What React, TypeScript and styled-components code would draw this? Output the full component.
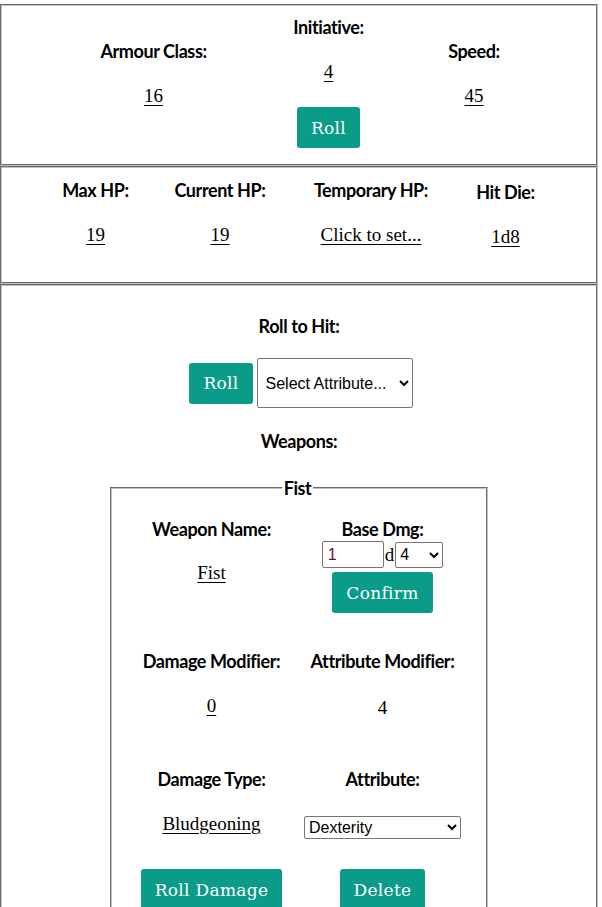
import styled, { createGlobalStyle } from "styled-components";

const teal = '#0a9c89';
const frame = '2px groove rgb(192, 192, 192)';

const GlobalStyle = createGlobalStyle`
    body{
        margin: 0;
        background: #fff;
        color: #000;
        font-family: Lato, "Noto Sans", sans-serif;
    }
`;

const App = () => {
    return(
        <>
            <GlobalStyle/>
            <Page>
                <StatBox $padTop={10} $padBottom={16}>
                    <StatRow $gap={80}>
                        <StatCol $width={112} $offset={24}>
                            <Label>Armour Class:</Label>
                            <Value>16</Value>
                        </StatCol>
                        <StatCol $width={78}>
                            <Label>Initiative:</Label>
                            <Value>4</Value>
                            <Button $top={24}>Roll</Button>
                        </StatCol>
                        <StatCol $width={53} $offset={24}>
                            <Label>Speed:</Label>
                            <Value>45</Value>
                        </StatCol>
                    </StatRow>
                </StatBox>
                <StatBox $padTop={11} $padBottom={34}>
                    <StatRow $gap={45}>
                        <StatCol $width={66}>
                            <Label>Max HP:</Label>
                            <Value>19</Value>
                        </StatCol>
                        <StatCol $width={93}>
                            <Label>Current HP:</Label>
                            <Value>19</Value>
                        </StatCol>
                        <StatCol $width={119}>
                            <Label>Temporary HP:</Label>
                            <Value>Click to set...</Value>
                        </StatCol>
                        <StatCol $width={60} $offset={2}>
                            <Label>Hit Die:</Label>
                            <Value>1d8</Value>
                        </StatCol>
                    </StatRow>
                </StatBox>
                <AttackBox>
                    <Label>Roll to Hit:</Label>
                    <RollRow>
                        <Button>Roll</Button>
                        <AttrSelect defaultValue="">
                            <option value="">Select Attribute...</option>
                            <option>Strength</option>
                            <option>Dexterity</option>
                        </AttrSelect>
                    </RollRow>
                    <Label $top={22}>Weapons:</Label>
                    <WeaponSet>
                        <Legend>Fist</Legend>
                        <WeaponRow $top={0}>
                            <Cell>
                                <Label>Weapon Name:</Label>
                                <Value $top={22}>Fist</Value>
                            </Cell>
                            <Cell>
                                <Label>Base Dmg:</Label>
                                <DiceRow>
                                    <DiceInput defaultValue="1"/>
                                    <DiceD>d</DiceD>
                                    <DieSelect defaultValue="4">
                                        <option>4</option>
                                        <option>6</option>
                                        <option>8</option>
                                        <option>10</option>
                                        <option>12</option>
                                    </DieSelect>
                                </DiceRow>
                                <Button $top={4}>Confirm</Button>
                            </Cell>
                        </WeaponRow>
                        <WeaponRow $top={37}>
                            <Cell>
                                <Label>Damage Modifier:</Label>
                                <Value>0</Value>
                            </Cell>
                            <Cell>
                                <Label>Attribute Modifier:</Label>
                                <Value $plain $top={25}>4</Value>
                            </Cell>
                        </WeaponRow>
                        <WeaponRow $top={49}>
                            <Cell>
                                <Label>Damage Type:</Label>
                                <Value>Bludgeoning</Value>
                            </Cell>
                            <Cell>
                                <Label>Attribute:</Label>
                                <StatSelect defaultValue="Dexterity">
                                    <option>Strength</option>
                                    <option>Dexterity</option>
                                    <option>Constitution</option>
                                </StatSelect>
                            </Cell>
                        </WeaponRow>
                        <WeaponRow $top={30}>
                            <Cell>
                                <Button>Roll Damage</Button>
                            </Cell>
                            <Cell>
                                <Button>Delete</Button>
                            </Cell>
                        </WeaponRow>
                    </WeaponSet>
                </AttackBox>
            </Page>
        </>
    );
};

export default App;

const Page = styled.div`
    width: 598px;
    padding-top: 4px;
`;

const StatBox = styled.section<{ $padTop: number; $padBottom: number }>`
    box-sizing: border-box;
    width: 598px;
    border: ${frame};
    padding: ${p => p.$padTop}px 0 ${p => p.$padBottom}px;
`;

const StatRow = styled.div<{ $gap: number }>`
    display: flex;
    justify-content: center;
    align-items: flex-start;
    gap: ${p => p.$gap}px;
`;

const StatCol = styled.div<{ $width: number; $offset?: number }>`
    display: flex;
    flex-direction: column;
    align-items: center;
    width: ${p => p.$width}px;
    padding-top: ${p => p.$offset ?? 0}px;
    white-space: nowrap;
`;

const Label = styled.div<{ $top?: number }>`
    margin-top: ${p => p.$top ?? 0}px;
    font-family: Lato, "Noto Sans", sans-serif;
    font-weight: 700;
    font-size: 18px;
    line-height: 22px;
    letter-spacing: -0.4px;
    white-space: nowrap;
`;

const Value = styled.div<{ $top?: number; $plain?: boolean }>`
    margin-top: ${p => p.$top ?? 23}px;
    font-family: "Liberation Serif", serif;
    font-size: 19px;
    line-height: 22px;
    text-decoration: ${p => p.$plain ? 'none' : 'underline'};
    text-underline-offset: 3px;
    cursor: pointer;
    white-space: nowrap;
`;

const Button = styled.button<{ $top?: number }>`
    margin-top: ${p => p.$top ?? 0}px;
    height: 41px;
    padding: 0 14px;
    border: none;
    border-radius: 3px;
    background: ${teal};
    color: #fff;
    font-family: "DejaVu Serif", serif;
    font-size: 17px;
    letter-spacing: 0.3px;
    cursor: pointer;
    white-space: nowrap;
`;

const AttackBox = styled.section`
    box-sizing: border-box;
    width: 598px;
    border: ${frame};
    padding: 29px 0 60px;
    display: flex;
    flex-direction: column;
    align-items: center;
`;

const RollRow = styled.div`
    display: flex;
    align-items: center;
    gap: 4px;
    margin-top: 21px;
    padding-left: 4px;
`;

const AttrSelect = styled.select`
    width: 156px;
    height: 50px;
    padding: 0 4px;
    border: 1px solid #767676;
    border-radius: 2px;
    background: #fff;
    color: #000;
    font-family: "Liberation Sans", Arial, sans-serif;
    font-size: 16px;
`;

const WeaponSet = styled.fieldset`
    box-sizing: border-box;
    width: 378px;
    margin: 25px 0 0;
    padding: 19px 17px 40px 14px;
    border: ${frame};
    min-inline-size: 0;
`;

const Legend = styled.legend`
    margin: 0 auto;
    padding: 0 2px;
    font-weight: 700;
    font-size: 18px;
    line-height: 22px;
    letter-spacing: -0.4px;
`;

const WeaponRow = styled.div<{ $top: number }>`
    display: grid;
    grid-template-columns: 171px 171px;
    align-items: start;
    margin-top: ${p => p.$top}px;
`;

const Cell = styled.div`
    display: flex;
    flex-direction: column;
    align-items: center;
`;

const DiceRow = styled.div`
    display: flex;
    align-items: center;
    gap: 1px;
    margin-top: 1px;
`;

const DiceInput = styled.input`
    box-sizing: border-box;
    width: 62px;
    height: 27px;
    padding: 0 5px;
    border: 1px solid #767676;
    border-radius: 2px;
    color: #6a0d3c;
    font-family: "Liberation Sans", Arial, sans-serif;
    font-size: 16px;
`;

const DiceD = styled.span`
    font-family: "Liberation Serif", serif;
    font-size: 19px;
    line-height: 22px;
`;

const DieSelect = styled.select`
    width: 48px;
    height: 26px;
    border: 1px solid #767676;
    border-radius: 2px;
    background: #fff;
    color: #000;
    font-family: "Liberation Sans", Arial, sans-serif;
    font-size: 16px;
`;

const StatSelect = styled.select`
    width: 157px;
    height: 23px;
    margin-top: 26px;
    border: 1px solid #767676;
    border-radius: 2px;
    background: #fff;
    color: #000;
    font-family: "Liberation Sans", Arial, sans-serif;
    font-size: 16px;
`;
